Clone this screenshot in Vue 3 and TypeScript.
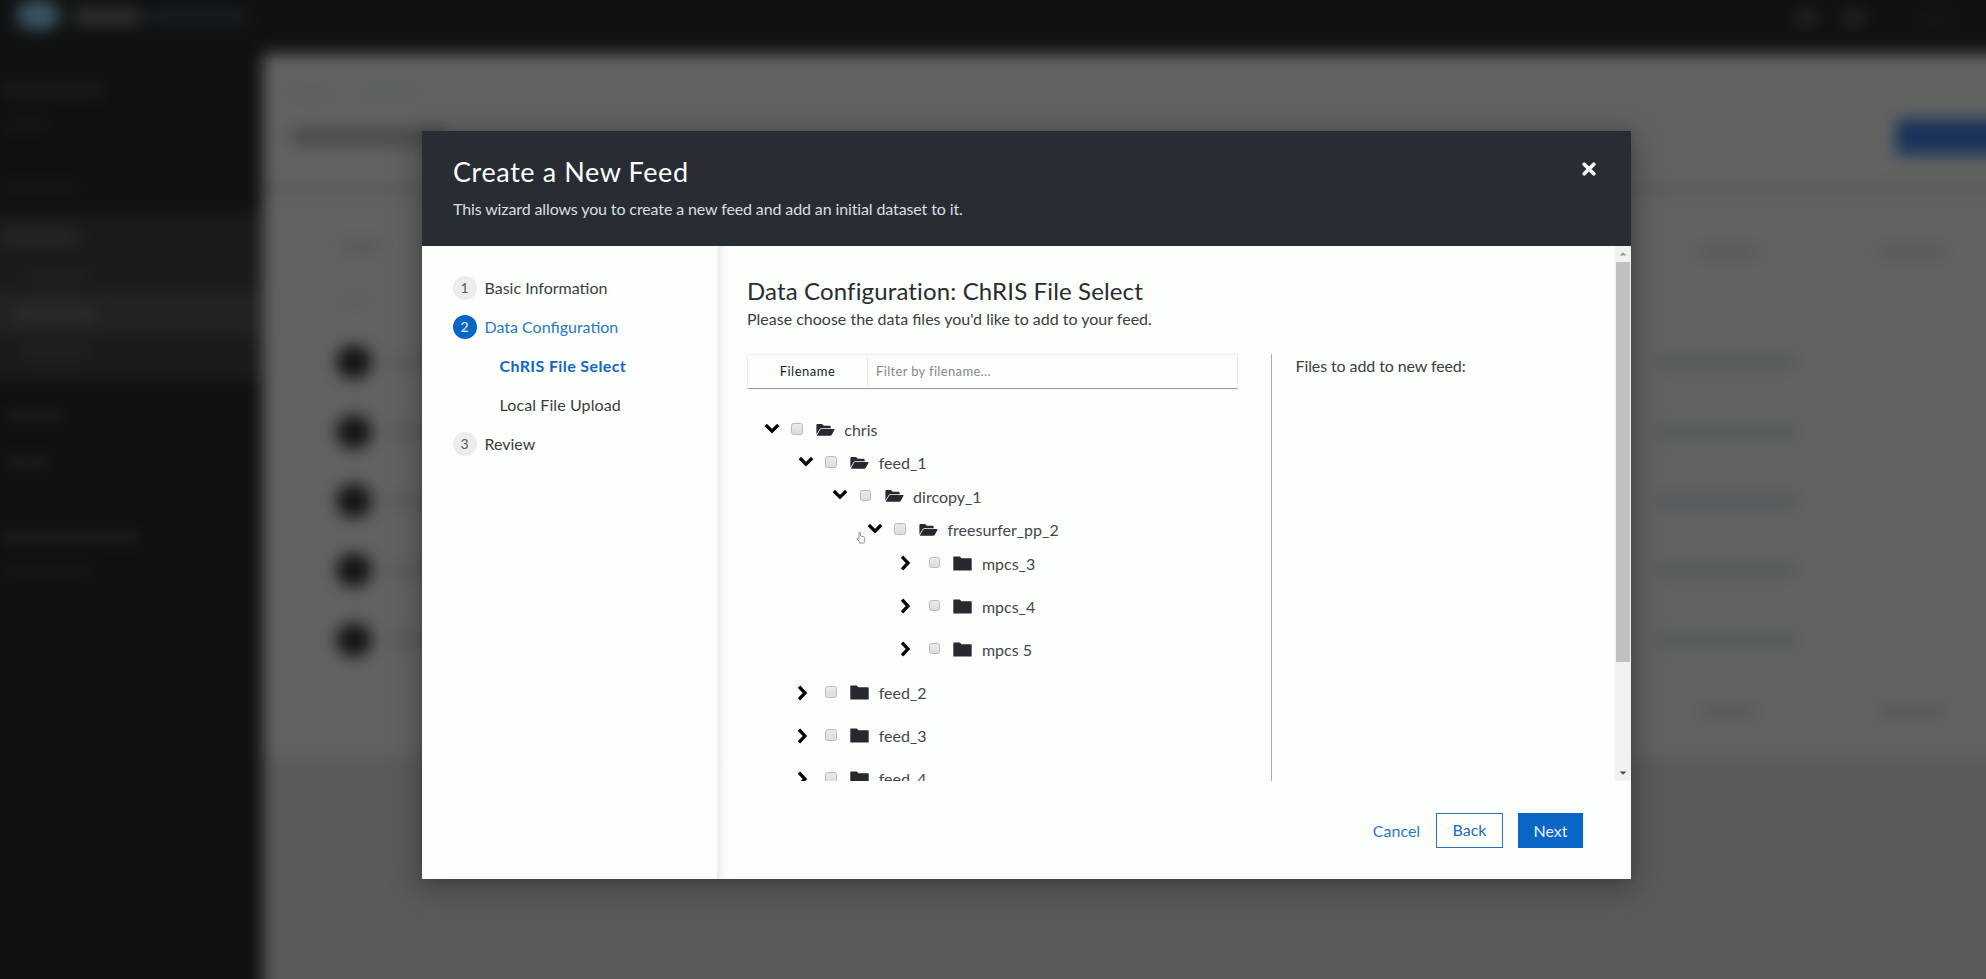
<script setup lang="ts">
interface Bar { w: number; h: number; gap: number; indent: number; tone: string }
interface TreeRow { name: string; level: number; open: boolean }
interface Step { label: string; num?: number; kind: 'step' | 'sub'; current?: boolean }

const bar = (w: number, h: number, gap: number, indent: number, tone: string): Bar => ({ w, h, gap, indent, tone })

const navTop: Bar[] = [
  bar(105, 14, 29, 0, '#1b1d1c'),
  bar(45, 12, 22, 5, '#181a19'),
  bar(80, 12, 50, 0, '#181a19'),
]
const navBottom: Bar[] = [
  bar(58, 13, 28, 5, '#1b1d1c'),
  bar(46, 13, 34, 5, '#1b1d1c'),
  bar(140, 14, 61, 0, '#1b1d1c'),
  bar(92, 12, 21, 2, '#181a19'),
]
const rows: number[] = [1, 2, 3, 4, 5]

const steps: Step[] = [
  { label: 'Basic Information', num: 1, kind: 'step' },
  { label: 'Data Configuration', num: 2, kind: 'step', current: true },
  { label: 'ChRIS File Select', kind: 'sub', current: true },
  { label: 'Local File Upload', kind: 'sub' },
  { label: 'Review', num: 3, kind: 'step' },
]

const tree: TreeRow[] = [
  { name: 'chris', level: 0, open: true },
  { name: 'feed_1', level: 1, open: true },
  { name: 'dircopy_1', level: 2, open: true },
  { name: 'freesurfer_pp_2', level: 3, open: true },
  { name: 'mpcs_3', level: 4, open: false },
  { name: 'mpcs_4', level: 4, open: false },
  { name: 'mpcs 5', level: 4, open: false },
  { name: 'feed_2', level: 1, open: false },
  { name: 'feed_3', level: 1, open: false },
  { name: 'feed_4', level: 1, open: false },
]

const barStyle = (b: Bar) => ({
  width: b.w + 'px',
  height: b.h + 'px',
  marginTop: b.gap + 'px',
  marginLeft: b.indent + 'px',
  background: b.tone,
})
const indentStyle = (r: TreeRow) => ({ paddingLeft: r.level * 34.4 + 'px' })
</script>

<template>
  <div class="screen">
    <div class="page" aria-hidden="true">
      <div class="masthead">
        <i class="logo"></i><i class="brand"></i><i class="brand-sub"></i>
        <span class="spacer"></span>
        <i class="tool"></i><i class="tool"></i><i class="user"></i>
      </div>
      <div class="page-body">
        <div class="side">
          <i v-for="(b, i) in navTop" :key="'t' + i" class="bar" :style="barStyle(b)"></i>
          <div class="side-group">
            <i class="bar g1"></i>
            <i class="bar g2"></i>
            <div class="active"><i class="bar g3"></i></div>
            <i class="bar g4"></i>
          </div>
          <i v-for="(b, i) in navBottom" :key="'b' + i" class="bar" :style="barStyle(b)"></i>
        </div>
        <div class="main">
          <div class="crumbs"><i></i><i class="link"></i></div>
          <div class="title-row"><i class="page-title"></i><i class="primary"></i></div>
          <div class="rule"></div>
          <div class="table">
            <div class="thead"><i class="c1"></i><i class="c2"></i><i class="c3"></i></div>
            <div class="subhead"><i></i></div>
            <div v-for="n in rows" :key="n" class="trow"><i class="dot"></i><i class="name"></i><i class="tlink"></i></div>
            <div class="thead foot"><i class="c2"></i><i class="c3"></i></div>
          </div>
        </div>
      </div>
    </div>

    <section class="modal">
      <header class="modal-head">
        <div>
          <h1>Create a New Feed</h1>
          <p>This wizard allows you to create a new feed and add an initial dataset to it.</p>
        </div>
        <svg class="close" viewBox="0 0 14 14" width="14" height="14"><path d="M2.2 2.2 L11.8 11.8 M11.8 2.2 L2.2 11.8" stroke="#f4f6f6" stroke-width="3.7" stroke-linecap="round" /></svg>
      </header>
      <div class="modal-body">
        <nav class="steps">
          <div v-for="s in steps" :key="s.label" class="step" :class="[s.kind, { current: s.current }]">
            <span v-if="s.num" class="num">{{ s.num }}</span>
            <span class="label">{{ s.label }}</span>
          </div>
        </nav>
        <div class="right">
          <div class="scroll">
            <div class="content">
              <h2>Data Configuration: ChRIS File Select</h2>
              <p class="lead">Please choose the data files you'd like to add to your feed.</p>
              <div class="columns">
                <div class="picker">
                  <div class="filter">
                    <span class="filter-label">Filename</span>
                    <span class="filter-input">Filter by filename...</span>
                  </div>
                  <div class="tree">
                    <div v-for="r in tree" :key="r.name" class="row" :class="{ open: r.open }" :style="indentStyle(r)">
                      <span class="toggle">
                        <svg v-if="r.open" width="16" height="11" viewBox="0 0 16 11"><path d="M1.8 2 L8 8.2 L14.2 2" fill="none" stroke="#050505" stroke-width="3.3" /></svg>
                        <svg v-else width="11" height="16" viewBox="0 0 11 16"><path d="M2 1.6 L8 8 L2 14.4" fill="none" stroke="#050505" stroke-width="3.3" /></svg>
                      </span>
                      <span class="check"></span>
                      <svg v-if="r.open" class="folder" width="19" height="14" viewBox="0 0 19 14">
                        <path d="M0.4 11.4 V2 Q0.4 1 1.4 1 H6 L7.8 2.8 H13.6 Q14.7 2.8 14.7 3.9 V5.2 H5.6 Q4.3 5.2 3.6 6.3 Z" fill="#26292d" />
                        <path d="M0.7 12.8 L3.9 6.9 Q4.4 5.9 5.6 5.9 H18 Q18.9 6 18.4 7 L15.8 11.8 Q15.2 12.8 14.1 12.8 Z" fill="#26292d" />
                      </svg>
                      <svg v-else class="folder" width="19" height="15" viewBox="0 0 19 15"><path d="M0.3 1 Q0.3 0.4 0.9 0.4 H6.8 L8.4 2.2 H18.1 Q18.7 2.2 18.7 2.8 V13.9 Q18.7 14.5 18.1 14.5 H0.9 Q0.3 14.5 0.3 13.9 Z" fill="#26292d" /></svg>
                      <span class="name">{{ r.name }}</span>
                    </div>
                  </div>
                </div>
                <div class="selected">Files to add to new feed:</div>
              </div>
            </div>
            <div class="scrollbar">
              <svg width="16" height="16" viewBox="0 0 16 16"><path d="M4.5 9.6 L8 6.2 L11.5 9.6 Z" fill="#9c9e9c" /></svg>
              <span class="thumb"></span>
              <span class="spacer"></span>
              <svg width="16" height="16" viewBox="0 0 16 16"><path d="M4.5 6.4 L8 9.8 L11.5 6.4 Z" fill="#4b4d4b" /></svg>
            </div>
          </div>
          <footer>
            <button class="btn link">Cancel</button>
            <button class="btn outline">Back</button>
            <button class="btn solid">Next</button>
          </footer>
        </div>
      </div>
      <svg class="cursor" width="10" height="13" viewBox="0 0 10 13"><path d="M3 7.5 V1.6 Q3.7 0.6 4.5 1.6 V5 L8 5.8 Q9 6.1 8.9 7.2 L8.3 10.2 V12 H3.3 V10.6 L1 7.8 Q1.2 6.6 2.2 7 Z" fill="#fff" stroke="#8b8d8b" stroke-width="0.9" /></svg>
    </section>
  </div>
</template>

<style>
html, body { margin: 0; background: #0f1110; overflow: hidden; }
</style>

<style scoped>
* { box-sizing: border-box; }
.screen {
  position: relative; width: 1986px; height: 979px; overflow: hidden;
  font-family: Lato, "Open Sans", sans-serif; font-size: 16px; color: #3a3d40; background: #0f1110;
}
i { display: block; flex: none; }
.spacer { flex: 1; }

.page { position: absolute; inset: -30px; padding: 30px; display: flex; flex-direction: column; background: linear-gradient(90deg, #0f1110 293px, #5a5c59 293px); filter: blur(8px); }
.masthead { height: 84px; margin: -30px -30px 0; padding: 30px 30px 0; display: flex; align-items: flex-start; background: #101212; }
.logo { width: 44px; height: 30px; margin: 0 0 0 16px; border-radius: 50%; background: #3c5665; }
.brand { width: 66px; height: 15px; margin: 9px 0 0 14px; background: #333433; }
.brand-sub { width: 96px; height: 15px; margin: 9px 0 0 10px; background: #151d22; }
.tool { width: 18px; height: 14px; margin: 11px 29px 0 0; background: #282a29; }
.user { width: 38px; height: 8px; margin: 14px 32px 0 24px; background: #191a17; }
.page-body { flex: 1; display: flex; margin-right: -30px; }
.side { width: 263px; flex: none; background: #0f1110; }
.side-group { height: 169px; margin: 19px 0 0 -30px; padding: 18px 0 0 30px; background: #191b1a; }
.g1 { width: 78px; height: 14px; background: #282a29; }
.g2 { width: 75px; height: 11px; margin: 24px 0 0 20px; background: #202221; }
.active { height: 48px; margin: 10px 0 0 -30px; padding: 18px 0 0 45px; background: #202221; }
.g3 { width: 80px; height: 13px; background: #2e302f; }
.g4 { width: 70px; height: 12px; margin: 9px 0 0 20px; background: #222423; }
.main { flex: 1; padding-bottom: 1px; }
.crumbs { display: flex; gap: 32px; height: 65px; padding: 34px 0 0 28px; background: #616360; }
.crumbs i { width: 38px; height: 11px; background: #5c5e5b; }
.crumbs .link { width: 58px; background: #5b6062; }
.title-row { display: flex; justify-content: space-between; height: 66px; padding-left: 28px; background: #616360; }
.page-title { width: 154px; height: 18px; margin-top: 9px; background: #4a4b4a; }
.primary { width: 120px; height: 36px; background: #18325c; }
.rule { height: 8px; margin-bottom: 0; background: #575956; }
.table { height: 562px; padding: 44px 0 0; background: #616360; }
.thead { display: flex; height: 26px; padding-left: 78px; }
.thead i { height: 12px; margin-top: 9px; background: #575955; }
.thead .c1 { width: 42px; margin-top: 3px; }
.thead .c2 { width: 60px; margin-left: 1315px; }
.thead .c3 { width: 66px; margin-left: 120px; }
.subhead { height: 64.5px; padding: 35px 0 0 80px; }
.subhead i { width: 25px; height: 8px; background: #5b5d5a; }
.trow { display: flex; align-items: center; height: 69.4px; padding-left: 73px; }
.dot { width: 36px; height: 34px; border-radius: 50%; background: #121412; }
.trow .name { width: 80px; height: 12px; margin-left: 14px; background: #595b58; }
.tlink { width: 140px; height: 12px; margin-left: 1191px; background: #53585e; }
.foot { padding-left: 120px; margin-top: 22px; }

.modal {
  position: absolute; left: 422px; top: 131px; width: 1209px; height: 748px; background: #fdfffd;
  display: flex; flex-direction: column; box-shadow: 0 8px 28px 4px rgba(10, 12, 10, 0.3), 0 0 8px rgba(10, 12, 10, 0.12);
}
.modal-head { height: 114.5px; flex: none; display: flex; justify-content: space-between; padding: 23px 35px 0 31px; background: #282d33; color: #fff; }
h1 { margin: 0; font-size: 27px; line-height: 36px; font-weight: 400; letter-spacing: 0.6px; white-space: nowrap; }
.modal-head p { margin: 7px 0 0; line-height: 24px; letter-spacing: -0.12px; color: #dcdfe1; white-space: nowrap; }
.close { margin-top: 8px; }
.modal-body { flex: 1; display: flex; min-height: 0; }
.steps { width: 294.5px; flex: none; padding: 22.5px 0 0 30.5px; }
.step { display: flex; align-items: center; height: 39.2px; white-space: nowrap; }
.step .label { margin-top: -1px; }
.sub { padding-left: 47px; }
.num { width: 24px; height: 24px; margin-right: 8px; border-radius: 50%; background: #ececec; font-size: 14px; line-height: 24px; text-align: center; color: #56595c; }
.current .num { background: #0a66c4; color: #e8f2fc; }
.current .label { color: #2a77c6; }
.sub .label { letter-spacing: 0.1px; }
.sub.current .label { color: #1467be; font-weight: 700; letter-spacing: 0.38px; }
.right { flex: 1; display: flex; flex-direction: column; min-width: 0; background: linear-gradient(90deg, #ececec 0, #f7f8f7 7px, #fdfffd 13px); }
.scroll { height: 535.5px; display: flex; overflow: hidden; }
.content { flex: 1; padding: 29px 0 0 30.5px; }
h2 { margin: 0; font-size: 24px; line-height: 32px; font-weight: 400; letter-spacing: 0.14px; color: #292c2f; white-space: nowrap; }
.lead { margin: -1px 0 0; line-height: 25px; white-space: nowrap; }
.columns { display: flex; margin-top: 23.5px; height: 460px; }
.picker { width: 524.5px; border-right: 1.5px solid #a9aba9; }
.filter { display: flex; width: 490.5px; height: 35px; border: 1px solid #ededed; border-bottom: 1.5px solid #98999a; font-size: 13px; line-height: 33px; }
.filter-label { width: 120px; border-right: 1px solid #ebebeb; text-align: center; letter-spacing: 0.5px; color: #1f1f1f; }
.filter-input { padding-left: 8px; letter-spacing: 0.34px; color: #85878a; }
.tree { padding: 20px 0 0 16.5px; }
.row { display: flex; align-items: center; height: 43.1px; white-space: nowrap; }
.row.open { height: 33.3px; }
.row.open:first-child { margin-top: 4px; }
.row.open + .row:not(.open) { margin-top: -4.5px; }
.toggle { width: 27.5px; display: flex; }
.row:not(.open) .toggle svg { margin-left: -1px; }
.open .toggle svg { margin-top: -3px; }
.check { width: 11.5px; height: 11.5px; margin-top: -1.5px; border: 1px solid #b9bbb9; border-radius: 2.5px; background: linear-gradient(#e9ebe9, #dcdedc); }
.folder { margin-left: 13.3px; }
.row .name { margin-left: 9.5px; color: #434649; }
.selected { padding: 0 0 0 24px; line-height: 23px; letter-spacing: -0.1px; }
.scrollbar { width: 16.5px; display: flex; flex-direction: column; align-items: center; background: #f0f2f0; }
.thumb { width: 14.5px; height: 400px; background: #bfc1bf; }
footer { display: flex; justify-content: flex-end; padding: 31.5px 48px 0 0; }
.btn { height: 35.5px; padding: 0; border: 0; background: none; font: inherit; line-height: 33px; text-align: center; }
.link.btn { width: 48px; color: #2a77c6; white-space: nowrap; }
.outline { width: 67px; margin-left: 15.5px; padding-bottom: 2px; border: 1px solid #2a72b8; line-height: 31px; color: #1a6cc0; }
.solid { width: 65px; margin-left: 15px; background: #0a66c4; color: #e8f2fc; }
.cursor { position: absolute; left: 434px; top: 400px; }
</style>
